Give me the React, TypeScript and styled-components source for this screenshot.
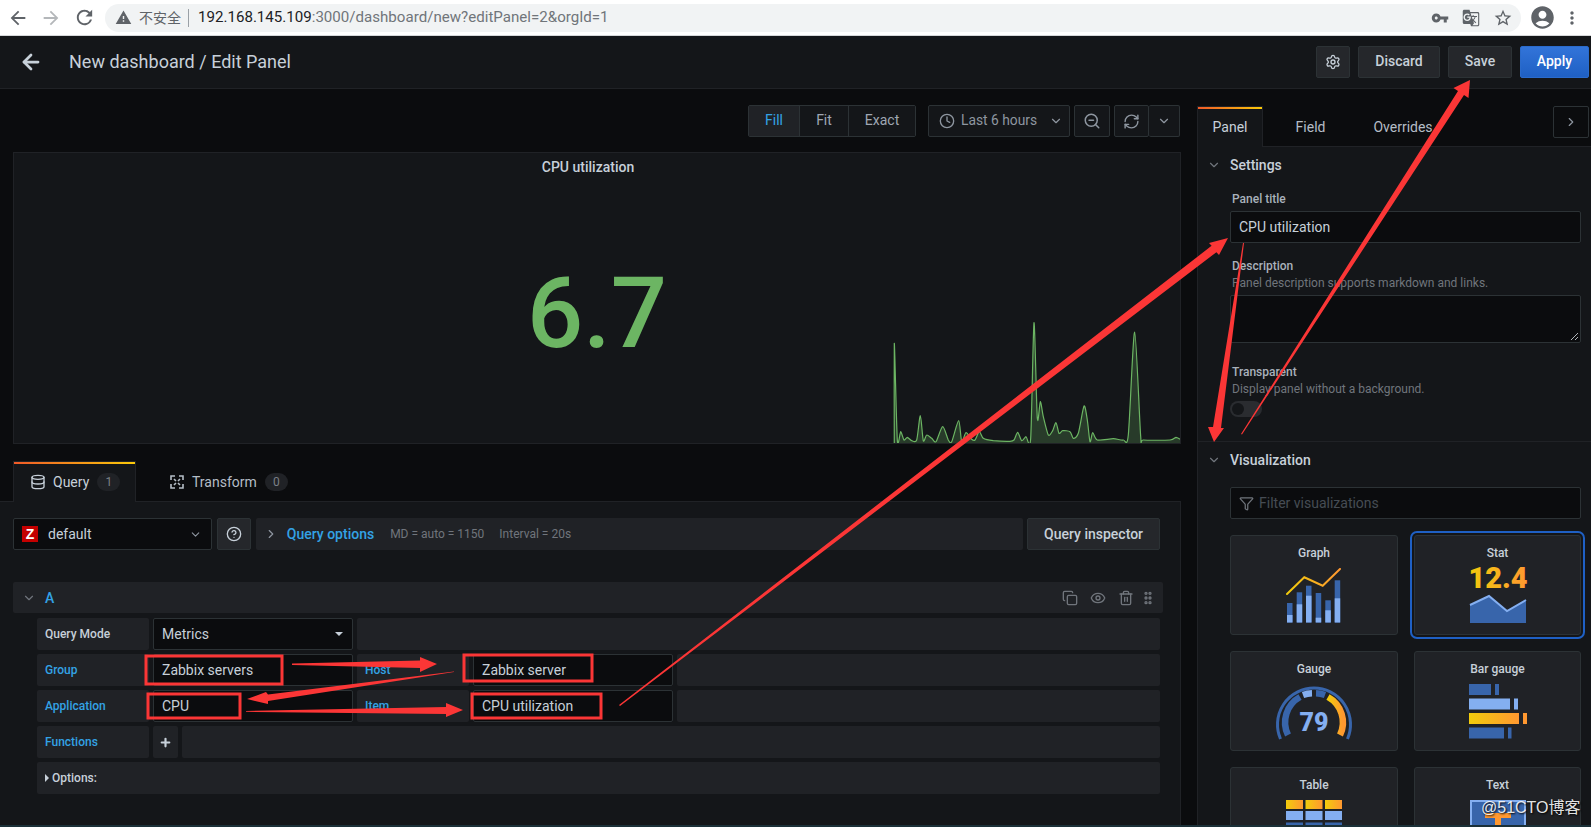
import styled, { createGlobalStyle } from "styled-components";
import {
  ArrowLeft,
  ChevronDown,
  ChevronRight,
  CircleHelp,
  Clock,
  Copy,
  Database,
  Eye,
  Filter,
  GripVertical,
  Plus,
  RefreshCw,
  Settings,
  Trash2,
  ZoomOut,
} from "lucide-react";
import {
  MdAccountCircle,
  MdArrowBack,
  MdArrowForward,
  MdGTranslate,
  MdMoreVert,
  MdRefresh,
  MdStarBorder,
  MdVpnKey,
  MdWarning,
} from "react-icons/md";

const colors = {
  page: "#0b0c0e",
  panel: "#141619",
  form: "#202226",
  border: "#2c3235",
  text: "#c7d0d9",
  dim: "#8e96a0",
  faint: "#70757c",
  blue: "#33a2e5",
  red: "#fb3636",
};

const GlobalStyle = createGlobalStyle`
  html, body {
    margin: 0;
    padding: 0;
    background: ${colors.page};
    overflow: hidden;
  }
  * { box-sizing: border-box; }
`;

const Page = styled.div`
  position: relative;
  width: 1591px;
  height: 827px;
  display: flex;
  flex-direction: column;
  overflow: hidden;
  background: ${colors.page};
  color: ${colors.text};
  font-family: Roboto, "Noto Sans CJK SC", sans-serif;
  font-size: 14px;
`;

/* browser chrome */
const BrowserBar = styled.div`
  flex: none;
  height: 36px;
  display: flex;
  align-items: center;
  background: #fff;
  border-bottom: 1px solid #d6d8da;
  color: #5f6368;
`;
const NavButtons = styled.div`
  width: 105px;
  padding-left: 7px;
  display: flex;
  gap: 11px;
  align-items: center;
`;
const Omnibox = styled.div`
  width: 1416px;
  height: 28px;
  padding: 0 8px 0 10px;
  border-radius: 14px;
  background: #f1f3f4;
  display: flex;
  align-items: center;
`;
const Insecure = styled.span`
  margin-left: 7px;
  padding-right: 7px;
  border-right: 1px solid #9aa0a6;
  line-height: 18px;
  font-size: 14px;
  color: #5f6368;
`;
const Url = styled.span`
  flex: 1;
  margin-left: 9px;
  padding-bottom: 2px;
  font-size: 15.1px;
  color: #70757a;
  b {
    font-weight: 400;
    color: #202124;
  }
`;
const OmniIcons = styled.div`
  display: flex;
  align-items: center;
  gap: 13px;
`;
const ProfileIcons = styled.div`
  flex: 1;
  display: flex;
  align-items: center;
  padding-left: 8px;
  gap: 6px;
`;

/* grafana header */
const Header = styled.header`
  flex: none;
  height: 53px;
  display: flex;
  align-items: center;
  padding: 0 2px 1px 19px;
  background: ${colors.panel};
  border-bottom: 1px solid ${colors.form};
`;
const HeaderTitle = styled.div`
  flex: 1;
  margin-left: 26px;
  font-size: 18px;
  color: ${colors.text};
`;
const HeaderActions = styled.div`
  display: flex;
  gap: 8px;
`;
const Button = styled.button<{ $primary?: boolean; $w: number }>`
  width: ${(p) => p.$w}px;
  height: 32px;
  padding: 0;
  display: flex;
  align-items: center;
  justify-content: center;
  border-radius: 2px;
  border: 1px solid ${(p) => (p.$primary ? "#2a6bcc" : colors.border)};
  background: ${(p) =>
    p.$primary ? "linear-gradient(#3274d9, #1f60c4)" : "#25272b"};
  color: ${(p) => (p.$primary ? "#fff" : colors.text)};
  font: 500 14px Roboto, sans-serif;
`;
const HeaderButton = styled(Button)`
  padding-bottom: 2px;
`;

const Body = styled.div`
  flex: 1;
  min-height: 0;
  display: flex;
`;
const LeftColumn = styled.main`
  flex: none;
  width: 1181px;
  display: flex;
  flex-direction: column;
`;

/* time toolbar */
const Toolbar = styled.div`
  height: 63px;
  padding: 16px 1px 15px 0;
  display: flex;
  justify-content: flex-end;
  gap: 4px;
`;
const RadioGroup = styled.div`
  display: flex;
  height: 32px;
  margin-right: 8px;
  border: 1px solid ${colors.border};
  border-radius: 2px;
`;
const RadioItem = styled.div<{ $active?: boolean; $w: number }>`
  width: ${(p) => p.$w}px;
  padding-bottom: 2px;
  display: flex;
  align-items: center;
  justify-content: center;
  background: ${(p) => (p.$active ? "#202226" : "#141619")};
  color: ${(p) => (p.$active ? colors.blue : "#9fa7b3")};
  & + & {
    border-left: 1px solid ${colors.border};
  }
`;
const ToolButton = styled.div<{ $w: number }>`
  width: ${(p) => p.$w}px;
  height: 32px;
  display: flex;
  align-items: center;
  justify-content: center;
  background: #141619;
  border: 1px solid ${colors.border};
  border-radius: 2px;
  color: ${colors.dim};
`;
const TimeButton = styled(ToolButton)`
  justify-content: flex-start;
  padding-left: 10px;
  gap: 6px;
`;
const ToolSplit = styled(ToolButton)`
  margin-left: -4px;
  border-left: none;
`;
const TimeLabel = styled.span`
  margin-right: 6px;
  padding-bottom: 2px;
  font-size: 13.8px;
`;

/* stat panel */
const StatPanel = styled.section`
  position: relative;
  flex: none;
  height: 292px;
  margin-left: 13px;
  padding-top: 4px;
  display: flex;
  flex-direction: column;
  align-items: center;
  background: ${colors.panel};
  border: 1px solid ${colors.form};
`;
const StatTitle = styled.div`
  height: 20px;
  margin-right: 18px;
  line-height: 20px;
  font-weight: 500;
  color: ${colors.text};
`;
const StatValue = styled.div`
  margin-top: 86px;
  line-height: 100px;
  font-size: 99px;
  font-weight: 500;
  color: #6cb563;
`;
const Sparkline = styled.svg`
  position: absolute;
  right: 0;
  bottom: 0;
`;

/* query tabs */
const QueryTabs = styled.div`
  flex: none;
  height: 58px;
  padding: 17px 0 0 13px;
  display: flex;
  gap: 17px;
  border-bottom: 1px solid ${colors.form};
`;
const Tab = styled.div<{ $active?: boolean; $w: number }>`
  position: relative;
  width: ${(p) => p.$w}px;
  height: 41px;
  padding-left: 16px;
  display: flex;
  align-items: center;
  gap: 7px;
  color: ${(p) => (p.$active ? colors.text : "#b5bdc6")};
  ${(p) =>
    p.$active
      ? `background: ${colors.panel};
         border: 1px solid ${colors.form};
         border-bottom: none;
         &::before {
           content: "";
           position: absolute;
           left: 0; right: 0; top: 0;
           height: 2px;
           background: linear-gradient(to right, #f05a28, #fbca0a);
         }`
      : ""}
`;
const Badge = styled.span`
  width: 23px;
  height: 18px;
  margin-left: 1px;
  border-radius: 9px;
  display: flex;
  align-items: center;
  justify-content: center;
  background: ${colors.form};
  color: #7b8087;
  font-size: 12px;
`;

/* query editor */
const QueryBody = styled.div`
  flex: 1;
  min-height: 0;
  padding: 16px 20px 0 13px;
  background: ${colors.panel};
  border-right: 1px solid ${colors.form};
`;
const SourceRow = styled.div`
  display: flex;
  gap: 5px;
  height: 32px;
  margin-bottom: 32px;
`;
const SourceSelect = styled.div`
  width: 199px;
  padding: 0 9px 0 8px;
  display: flex;
  align-items: center;
  background: ${colors.page};
  border: 1px solid ${colors.border};
  border-radius: 2px;
`;
const ZLogo = styled.span`
  width: 16px;
  height: 16px;
  margin-right: 10px;
  display: flex;
  align-items: center;
  justify-content: center;
  background: #c40000;
  color: #fff;
  font: 700 14px "Liberation Sans", sans-serif;
`;
const Grow = styled.span`
  flex: 1;
`;
const HelpButton = styled.div`
  width: 34px;
  display: flex;
  align-items: center;
  justify-content: center;
  background: #25272b;
  border: 1px solid ${colors.border};
  border-radius: 2px;
`;
const OptionsBar = styled.div`
  width: 768px;
  padding-left: 8px;
  display: flex;
  align-items: center;
  background: ${colors.form};
  border-radius: 2px;
  color: ${colors.dim};
`;
const OptionsTitle = styled.span`
  margin: 0 16px 0 9px;
  font-weight: 500;
  color: ${colors.blue};
`;
const OptionsMeta = styled.span`
  margin-right: 15px;
  font-size: 12px;
  color: ${colors.faint};
`;
const InspectorButton = styled(Button)`
  margin-left: -1px;
`;
const RowHeader = styled.div`
  width: 1150px;
  height: 31px;
  margin-bottom: 5px;
  padding: 0 7px 0 9px;
  display: flex;
  align-items: center;
  background: ${colors.form};
  border-radius: 2px;
  color: ${colors.faint};
`;
const RowLetter = styled.span`
  margin-left: 9px;
  font-weight: 500;
  color: ${colors.blue};
`;
const RowIcons = styled.div`
  display: flex;
  align-items: center;
  gap: 12px;
`;
const DragHandle = styled.span`
  display: flex;
  margin-left: -6px;
`;
const FormRows = styled.div`
  margin-left: 24px;
  width: 1123px;
  display: flex;
  flex-direction: column;
  gap: 4px;
`;
const FormRow = styled.div`
  height: 32px;
  display: flex;
  gap: 4px;
`;
const FieldLabel = styled.div<{ $w: number; $link?: boolean }>`
  flex: none;
  width: ${(p) => p.$w}px;
  padding-left: 8px;
  display: flex;
  align-items: center;
  background: ${colors.form};
  border-radius: 2px;
  font-size: 12px;
  font-weight: 500;
  color: ${(p) => (p.$link ? colors.blue : colors.text)};
`;
const FieldValue = styled.div<{ $w: number }>`
  flex: none;
  width: ${(p) => p.$w}px;
  padding-left: 8px;
  padding-bottom: 1px;
  display: flex;
  align-items: center;
  background: ${colors.page};
  border: 1px solid ${colors.border};
  border-radius: 2px;
  color: ${colors.text};
`;
const Filler = styled.div`
  flex: 1;
  background: ${colors.form};
  border-radius: 2px;
`;
const Caret = styled.span`
  margin-left: auto;
  margin-right: 9px;
  width: 0;
  height: 0;
  border: 4px solid transparent;
  border-top: 4px solid ${colors.text};
  border-bottom: none;
`;
const PlusButton = styled.div`
  flex: none;
  width: 25px;
  display: flex;
  align-items: center;
  justify-content: center;
  background: ${colors.form};
  border-radius: 2px;
  color: ${colors.text};
`;
const OptionsRow = styled.div`
  height: 32px;
  padding-left: 8px;
  display: flex;
  align-items: center;
  gap: 3px;
  background: ${colors.form};
  border-radius: 2px;
  font-size: 12px;
  font-weight: 500;
`;
const RightCaret = styled.span`
  width: 0;
  height: 0;
  border: 4px solid transparent;
  border-left: 4px solid ${colors.text};
  border-right: none;
`;

/* side panel */
const SidePanel = styled.aside`
  flex: none;
  width: 394px;
  margin-left: 16px;
  padding-top: 17px;
  display: flex;
  flex-direction: column;
`;
const SideTabs = styled.div`
  flex: none;
  height: 41px;
  display: flex;
  gap: 17px;
  padding-right: 2px;
  border-bottom: 1px solid ${colors.form};
`;
const SideTab = styled(Tab)`
  padding-left: 0;
  justify-content: center;
`;
const CollapseButton = styled.div`
  width: 36px;
  height: 32px;
  margin-left: auto;
  display: flex;
  align-items: center;
  justify-content: center;
  border: 1px solid ${colors.border};
  border-radius: 2px;
  color: ${colors.dim};
`;
const SideContent = styled.div`
  flex: 1;
  min-height: 0;
  background: ${colors.panel};
  border-left: 1px solid ${colors.form};
  overflow: hidden;
`;
const Section = styled.div<{ $divided?: boolean }>`
  padding: 0 10px 24px 32px;
  border-bottom: ${(p) => (p.$divided ? `1px solid ${colors.form}` : "none")};
`;
const SectionHeader = styled.div`
  height: 36px;
  margin-left: -23px;
  display: flex;
  align-items: center;
  gap: 9px;
  color: ${colors.faint};
`;
const SectionTitle = styled.span`
  font-weight: 500;
  color: ${colors.text};
`;
const FieldName = styled.div`
  height: 16px;
  line-height: 16px;
  padding-left: 2px;
  font-size: 12px;
  font-weight: 500;
  color: #a9b1bb;
`;
const FirstFieldName = styled(FieldName)`
  margin: 8px 0 -1px;
`;
const FieldHelp = styled.div`
  height: 17px;
  margin-top: 1px;
  line-height: 17px;
  padding-left: 2px;
  font-size: 12px;
  color: ${colors.faint};
`;
const TextInput = styled.div`
  height: 32px;
  margin: 5px 0 15px;
  padding-left: 8px;
  display: flex;
  align-items: center;
  background: ${colors.page};
  border: 1px solid ${colors.border};
  border-radius: 2px;
`;
const TextArea = styled.div`
  position: relative;
  height: 48px;
  margin: 3px 0 21px;
  background: ${colors.page};
  border: 1px solid ${colors.border};
  border-radius: 2px;
`;
const ResizeGrip = styled.svg`
  position: absolute;
  right: 1px;
  bottom: 1px;
`;
const Toggle = styled.div`
  position: relative;
  width: 32px;
  height: 16px;
  margin-top: 3px;
  border-radius: 8px;
  background: #2a2c30;
  &::after {
    content: "";
    position: absolute;
    left: 2px;
    top: 2px;
    width: 12px;
    height: 12px;
    border-radius: 50%;
    background: #141619;
  }
`;
const VizSection = styled.div`
  padding: 0 10px 0 32px;
`;
const FilterInput = styled.div`
  height: 32px;
  margin-top: 9px;
  padding-left: 8px;
  display: flex;
  align-items: center;
  gap: 5px;
  background: ${colors.page};
  border: 1px solid ${colors.border};
  border-radius: 2px;
  color: #464c54;
`;
const VizGrid = styled.div`
  margin-top: 16px;
  display: grid;
  grid-template-columns: 168px 167px;
  grid-auto-rows: 100px;
  gap: 16px;
`;
const VizCard = styled.div<{ $selected?: boolean }>`
  padding-top: 9px;
  display: flex;
  flex-direction: column;
  align-items: center;
  gap: 7px;
  background: ${colors.form};
  border: 1px solid ${colors.border};
  border-radius: 3px;
  ${(p) =>
    p.$selected ? `box-shadow: 0 0 0 2px #141619, 0 0 0 4px #1f60c4;` : ""}
`;
const VizName = styled.div`
  height: 16px;
  line-height: 16px;
  font-size: 12px;
  font-weight: 500;
  color: ${colors.text};
`;
const StatDrawing = styled.svg`
  margin-top: -8px;
`;
const BottomStrip = styled.div`
  flex: none;
  height: 2px;
  background: #1b3038;
`;

/* things laid over the screenshot */
const Annotations = styled.svg`
  position: absolute;
  left: 0;
  top: 0;
  pointer-events: none;
`;
const Watermark = styled.div`
  position: absolute;
  left: 1481px;
  top: 798px;
  font-family: "Liberation Sans", "Noto Sans CJK SC", sans-serif;
  font-size: 16px;
  line-height: 20px;
  color: rgba(255, 255, 255, 0.9);
  text-shadow: 1px 1px 2px #000;
`;

const sparkRaw = [
  [103, 430], [103, 130], [112, 420], [122, 395], [132, 420], [142, 412], [155, 422], [170, 420],
  [181, 347], [190, 422], [200, 405], [215, 415], [228, 425], [248, 380], [265, 420], [275, 425],
  [296, 362], [305, 425], [318, 398], [335, 418], [345, 420], [358, 395], [370, 415], [400, 422],
  [450, 424], [462, 420], [473, 397], [485, 422], [498, 410], [512, 415], [522, 68], [532, 355],
  [541, 305], [550, 350], [565, 405], [578, 392], [588, 368], [597, 400], [608, 392], [630, 395],
  [640, 415], [655, 400], [672, 318], [682, 360], [690, 425], [698, 398], [712, 420], [760, 416],
  [790, 420], [805, 405], [824, 96], [842, 410], [850, 420], [930, 420], [948, 412], [960, 418],
];
const sparkXY = sparkRaw.map(([x, y]) => [x / 3 - 32, y / 3 + 1]);

// catmull-rom through the samples, so the peaks come out round
const sparkLine = sparkXY
  .map(([x, y], i) => {
    if (i === 0) return `M${x.toFixed(1)} ${y.toFixed(1)}`;
    const p0 = sparkXY[Math.max(i - 2, 0)];
    const p1 = sparkXY[i - 1];
    const p3 = sparkXY[Math.min(i + 1, sparkXY.length - 1)];
    const c1x = p1[0] + (x - p0[0]) / 8;
    const c1y = p1[1] + (y - p0[1]) / 8;
    const c2x = x - (p3[0] - p1[0]) / 8;
    const c2y = y - (p3[1] - p1[1]) / 8;
    return `C${c1x.toFixed(1)} ${c1y.toFixed(1)} ${c2x.toFixed(1)} ${c2y.toFixed(1)} ${x.toFixed(1)} ${y.toFixed(1)}`;
  })
  .join(" ");

const GradientDefs = () => (
  <svg width="0" height="0" aria-hidden="true" style={{ position: "absolute" }}>
    <defs>
      <linearGradient id="warm" x1="0" y1="0" x2="1" y2="0">
        <stop offset="0" stopColor="#f2cc0c" />
        <stop offset="1" stopColor="#ff9830" />
      </linearGradient>
    </defs>
  </svg>
);

const graphBars = [
  [1, 35, 47],
  [10.7, 24.3, 36.3],
  [20, 17.7, 27.7],
  [29.7, 25, 49.7],
  [39.3, 32.3, 42.3],
  [48.7, 12.3, 30.3],
];

const GraphIcon = () => (
  <svg width="56" height="55" viewBox="0 0 56 55">
    {graphBars.map(([x, top, mid]) => (
      <g key={x}>
        <rect x={x} y={top} width="5.5" height={54.5 - top} fill="#3865ab" />
        <rect x={x} y={mid} width="5.5" height={54.5 - mid} fill="#84aff1" />
      </g>
    ))}
    <polyline points="1,26 18.3,9.3 36.7,17.7 54,1" fill="none" stroke="url(#warm)" strokeWidth="2" strokeLinecap="round" />
  </svg>
);

const StatIcon = () => (
  <StatDrawing width="64" height="63" viewBox="-1 -8 64 63">
    <text x="31" y="20" textAnchor="middle" fontFamily="Roboto, sans-serif" fontWeight="900" fontSize="29" fill="url(#warm)">
      12.4
    </text>
    <polygon points="3,37 22,28 40,43 59,32 59,55 3,55" fill="#3865ab" />
    <polyline points="3,37 22,28 40,43 59,32" fill="none" stroke="#84aff1" strokeWidth="2" />
  </StatDrawing>
);

const GaugeIcon = () => (
  <svg width="78" height="58" viewBox="0 0 78 58">
    <path d="M5.5 55 A36.5 36.5 0 1 1 72.5 55" fill="none" stroke="#3865ab" strokeWidth="3" />
    <path d="M13 51 A29 29 0 0 1 25 13" fill="none" stroke="#3865ab" strokeWidth="6.5" />
    <path d="M28 11 A29 29 0 0 1 37 9.3" fill="none" stroke="#84aff1" strokeWidth="6.5" />
    <path d="M41 9.3 A29 29 0 0 1 50 11" fill="none" stroke="#3865ab" strokeWidth="6.5" />
    <path d="M53 13 A29 29 0 0 1 65 51" fill="none" stroke="url(#warm)" strokeWidth="6.5" />
    <text x="39" y="46.5" textAnchor="middle" fontFamily="Roboto, sans-serif" fontWeight="900" fontSize="25" fill="#84aff1">
      79
    </text>
  </svg>
);

const BarGaugeIcon = () => (
  <svg width="58" height="55" viewBox="0 0 58 55">
    <rect x="0" y="0" width="22" height="11" fill="#3865ab" />
    <rect x="26" y="0" width="4" height="11" fill="#3865ab" />
    <rect x="0" y="14.5" width="41" height="11" fill="#84aff1" />
    <rect x="45" y="14.5" width="4" height="11" fill="#84aff1" />
    <rect x="0" y="29" width="50" height="11" fill="url(#warm)" />
    <rect x="54" y="29" width="4" height="11" fill="#ff9830" />
    <rect x="0" y="43.5" width="35" height="11" fill="#3865ab" />
    <rect x="39" y="43.5" width="3.5" height="11" fill="#3865ab" />
  </svg>
);

const TableIcon = () => (
  <svg width="56" height="55" viewBox="0 0 56 55">
    {[0, 19.5, 39].map((x) => (
      <g key={x}>
        <rect x={x} y="0" width="17" height="9" fill="url(#warm)" />
        <rect x={x} y="11" width="17" height="9" fill="#84aff1" />
        <rect x={x} y="22.5" width="17" height="9" fill="#3865ab" />
      </g>
    ))}
  </svg>
);

const TextIcon = () => (
  <svg width="56" height="55" viewBox="0 0 56 55">
    <rect x="1" y="1" width="54" height="53" fill="#3865ab" stroke="#84aff1" strokeWidth="2" />
    <rect x="15" y="13" width="26" height="5" fill="#ff9830" />
    <rect x="25" y="13" width="6" height="30" fill="#ff9830" />
  </svg>
);

const TransformIcon = () => (
  <svg width="16" height="16" viewBox="0 0 16 16" fill="none" stroke="currentColor" strokeWidth="1.6">
    <path d="M2 6V2h4M10 2h4v4M14 10v4h-4M6 14H2v-4" />
    <path d="M5 5l2 2M11 5L9 7M11 11L9 9M5 11l2-2" />
  </svg>
);

export default function App() {
  return (
    <Page>
      <GlobalStyle />
      <GradientDefs />
      <BrowserBar>
        <NavButtons>
          <MdArrowBack size={22} />
          <MdArrowForward size={22} color="#b4b7ba" />
          <MdRefresh size={23} />
        </NavButtons>
        <Omnibox>
          <MdWarning size={17} />
          <Insecure>不安全</Insecure>
          <Url>
            <b>192.168.145.109</b>:3000/dashboard/new?editPanel=2&amp;orgId=1
          </Url>
          <OmniIcons>
            <MdVpnKey size={18} />
            <MdGTranslate size={18} />
            <MdStarBorder size={20} />
          </OmniIcons>
        </Omnibox>
        <ProfileIcons>
          <MdAccountCircle size={27} />
          <MdMoreVert size={20} />
        </ProfileIcons>
      </BrowserBar>

      <Header>
        <ArrowLeft size={24} strokeWidth={2.75} color={colors.text} />
        <HeaderTitle>New dashboard / Edit Panel</HeaderTitle>
        <HeaderActions>
          <Button $w={34}>
            <Settings size={16} />
          </Button>
          <HeaderButton $w={82}>Discard</HeaderButton>
          <HeaderButton $w={64}>Save</HeaderButton>
          <HeaderButton $w={69} $primary>
            Apply
          </HeaderButton>
        </HeaderActions>
      </Header>

      <Body>
        <LeftColumn>
          <Toolbar>
            <RadioGroup>
              <RadioItem $w={50} $active>
                Fill
              </RadioItem>
              <RadioItem $w={49}>Fit</RadioItem>
              <RadioItem $w={67}>Exact</RadioItem>
            </RadioGroup>
            <TimeButton $w={142}>
              <Clock size={16} />
              <TimeLabel>Last 6 hours</TimeLabel>
              <ChevronDown size={14} />
            </TimeButton>
            <ToolButton $w={36}>
              <ZoomOut size={18} />
            </ToolButton>
            <ToolButton $w={35}>
              <RefreshCw size={17} />
            </ToolButton>
            <ToolSplit $w={31}>
              <ChevronDown size={14} />
            </ToolSplit>
          </Toolbar>

          <StatPanel>
            <StatTitle>CPU utilization</StatTitle>
            <StatValue>6.7</StatValue>
            <Sparkline width="288" height="144" viewBox="0 0 288 144">
              <path d={`${sparkLine} L288 144 L2.3 144 Z`} fill="#73bf69" fillOpacity="0.22" />
              <path d={sparkLine} fill="none" stroke="#6cb563" strokeWidth="1.2" />
            </Sparkline>
          </StatPanel>

          <QueryTabs>
            <Tab $w={123} $active>
              <Database size={16} />
              Query
              <Badge>1</Badge>
            </Tab>
            <Tab $w={135}>
              <TransformIcon />
              Transform
              <Badge>0</Badge>
            </Tab>
          </QueryTabs>

          <QueryBody>
            <SourceRow>
              <SourceSelect>
                <ZLogo>Z</ZLogo>
                default
                <Grow />
                <ChevronDown size={13} color={colors.dim} />
              </SourceSelect>
              <HelpButton>
                <CircleHelp size={16} />
              </HelpButton>
              <OptionsBar>
                <ChevronRight size={14} />
                <OptionsTitle>Query options</OptionsTitle>
                <OptionsMeta>MD = auto = 1150</OptionsMeta>
                <OptionsMeta>Interval = 20s</OptionsMeta>
              </OptionsBar>
              <InspectorButton $w={133}>Query inspector</InspectorButton>
            </SourceRow>

            <RowHeader>
              <ChevronDown size={14} />
              <RowLetter>A</RowLetter>
              <Grow />
              <RowIcons>
                <Copy size={16} />
                <Eye size={16} />
                <Trash2 size={16} />
                <DragHandle>
                  <GripVertical size={16} strokeWidth={3} />
                </DragHandle>
              </RowIcons>
            </RowHeader>

            <FormRows>
              <FormRow>
                <FieldLabel $w={112}>Query Mode</FieldLabel>
                <FieldValue $w={200}>
                  Metrics
                  <Caret />
                </FieldValue>
                <Filler />
              </FormRow>
              <FormRow>
                <FieldLabel $w={112} $link>
                  Group
                </FieldLabel>
                <FieldValue $w={200}>Zabbix servers</FieldValue>
                <FieldLabel $w={112} $link>
                  Host
                </FieldLabel>
                <FieldValue $w={200}>Zabbix server</FieldValue>
                <Filler />
              </FormRow>
              <FormRow>
                <FieldLabel $w={112} $link>
                  Application
                </FieldLabel>
                <FieldValue $w={200}>CPU</FieldValue>
                <FieldLabel $w={112} $link>
                  Item
                </FieldLabel>
                <FieldValue $w={200}>CPU utilization</FieldValue>
                <Filler />
              </FormRow>
              <FormRow>
                <FieldLabel $w={112} $link>
                  Functions
                </FieldLabel>
                <PlusButton>
                  <Plus size={13} strokeWidth={4} />
                </PlusButton>
                <Filler />
              </FormRow>
              <OptionsRow>
                <RightCaret />
                Options:
              </OptionsRow>
            </FormRows>
          </QueryBody>
        </LeftColumn>

        <SidePanel>
          <SideTabs>
            <SideTab $w={66} $active>
              Panel
            </SideTab>
            <SideTab $w={61}>Field</SideTab>
            <SideTab $w={90}>Overrides</SideTab>
            <CollapseButton>
              <ChevronRight size={14} />
            </CollapseButton>
          </SideTabs>
          <SideContent>
            <Section $divided>
              <SectionHeader>
                <ChevronDown size={14} />
                <SectionTitle>Settings</SectionTitle>
              </SectionHeader>
              <FirstFieldName>Panel title</FirstFieldName>
              <TextInput>CPU utilization</TextInput>
              <FieldName>Description</FieldName>
              <FieldHelp>Panel description supports markdown and links.</FieldHelp>
              <TextArea>
                <ResizeGrip width="9" height="9" viewBox="0 0 9 9" stroke="#b0b4b8" strokeWidth="1">
                  <path d="M1 8L8 1M5 8l3-3" />
                </ResizeGrip>
              </TextArea>
              <FieldName>Transparent</FieldName>
              <FieldHelp>Display panel without a background.</FieldHelp>
              <Toggle />
            </Section>
            <VizSection>
              <SectionHeader>
                <ChevronDown size={14} />
                <SectionTitle>Visualization</SectionTitle>
              </SectionHeader>
              <FilterInput>
                <Filter size={15} color={colors.faint} />
                Filter visualizations
              </FilterInput>
              <VizGrid>
                <VizCard>
                  <VizName>Graph</VizName>
                  <GraphIcon />
                </VizCard>
                <VizCard $selected>
                  <VizName>Stat</VizName>
                  <StatIcon />
                </VizCard>
                <VizCard>
                  <VizName>Gauge</VizName>
                  <GaugeIcon />
                </VizCard>
                <VizCard>
                  <VizName>Bar gauge</VizName>
                  <BarGaugeIcon />
                </VizCard>
                <VizCard>
                  <VizName>Table</VizName>
                  <TableIcon />
                </VizCard>
                <VizCard>
                  <VizName>Text</VizName>
                  <TextIcon />
                </VizCard>
              </VizGrid>
            </VizSection>
          </SideContent>
        </SidePanel>
      </Body>
      <BottomStrip />

      <Annotations width="1591" height="827" viewBox="0 0 1591 827">
        <g fill="none" stroke={colors.red} strokeWidth="3">
          <rect x="146" y="656" width="136" height="28" />
          <rect x="464" y="655" width="128" height="26" />
          <rect x="148" y="694" width="92" height="24" />
          <rect x="472" y="694" width="129" height="24" />
        </g>
        <g fill={colors.red}>
          {/* Group -> Host */}
          <polygon points="292,663.5 420,660.5 420,657 437,664 420,672 420,668 292,665" />
          {/* Host -> Application */}
          <polygon points="454,671.5 268,694.5 266,692 247,699 268,704 268,701 454,672" />
          {/* CPU -> Item */}
          <polygon points="246,711 446,707 446,703 463,710 446,717 446,714 246,711.8" />
          {/* Item -> Panel title */}
          <polygon points="619,705 1211.6,245.8 1209,243 1228,238 1219,255 1216.4,252.2 620,706" />
          {/* title -> Visualization */}
          <polygon points="1243,243 1244,243 1221,428 1224,428 1214,442 1208,427 1213,427" />
          {/* Transparent -> Save */}
          <polygon points="1241,434 1242,434.5 1464,95 1468.5,98 1470,80 1453.5,88 1458,91" />
        </g>
      </Annotations>
      <Watermark>@51CTO博客</Watermark>
    </Page>
  );
}
